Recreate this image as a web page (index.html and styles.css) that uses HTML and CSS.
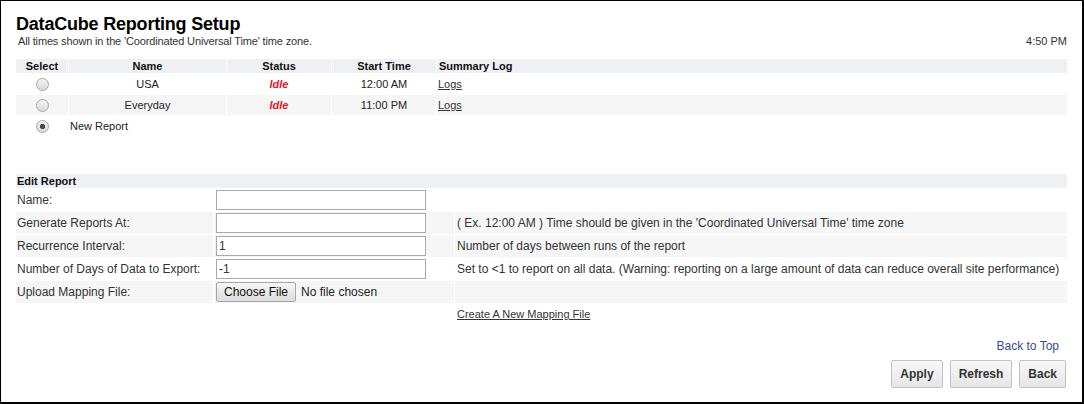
FILE: index.html
```html
<!DOCTYPE html>
<html lang="en">
<head>
<meta charset="utf-8">
<title>DataCube Reporting Setup</title>
<link rel="stylesheet" href="styles.css">
</head>
<body>
<div class="page">
  <h1 class="title">DataCube Reporting Setup</h1>
  <div class="subhead">
    <span class="zone-note">All times shown in the 'Coordinated Universal Time' time zone.</span>
    <span>4:50 PM</span>
  </div>

  <table class="reports">
    <colgroup>
      <col class="c-select"><col class="c-name"><col class="c-status"><col class="c-time"><col>
    </colgroup>
    <thead>
      <tr><th>Select</th><th>Name</th><th>Status</th><th>Start Time</th><th class="left">Summary Log</th></tr>
    </thead>
    <tbody>
      <tr>
        <td><input type="radio" name="report" class="radio"></td>
        <td>USA</td>
        <td class="idle">Idle</td>
        <td>12:00 AM</td>
        <td class="left"><a href="#" class="plain-link">Logs</a></td>
      </tr>
      <tr class="alt">
        <td><input type="radio" name="report" class="radio"></td>
        <td>Everyday</td>
        <td class="idle">Idle</td>
        <td>11:00 PM</td>
        <td class="left"><a href="#" class="plain-link">Logs</a></td>
      </tr>
      <tr>
        <td><input type="radio" name="report" class="radio" checked></td>
        <td colspan="4" class="left new-report">New Report</td>
      </tr>
    </tbody>
  </table>

  <table class="edit">
    <colgroup>
      <col class="c-label"><col class="c-input"><col>
    </colgroup>
    <thead>
      <tr><th colspan="3">Edit Report</th></tr>
    </thead>
    <tbody>
      <tr>
        <td class="label">Name:</td>
        <td><input type="text" class="field"></td>
        <td class="desc"></td>
      </tr>
      <tr class="alt">
        <td class="label">Generate Reports At:</td>
        <td><input type="text" class="field"></td>
        <td class="desc">( Ex. 12:00 AM ) Time should be given in the 'Coordinated Universal Time' time zone</td>
      </tr>
      <tr class="alt">
        <td class="label">Recurrence Interval:</td>
        <td><input type="text" class="field" value="1"></td>
        <td class="desc">Number of days between runs of the report</td>
      </tr>
      <tr>
        <td class="label">Number of Days of Data to Export:</td>
        <td><input type="text" class="field" value="-1"></td>
        <td class="desc">Set to &lt;1 to report on all data. (Warning: reporting on a large amount of data can reduce overall site performance)</td>
      </tr>
      <tr class="alt">
        <td class="label">Upload Mapping File:</td>
        <td><input type="file" class="file"></td>
        <td class="desc"></td>
      </tr>
      <tr class="link-row">
        <td></td>
        <td></td>
        <td class="desc"><a href="#" class="plain-link">Create A New Mapping File</a></td>
      </tr>
    </tbody>
  </table>

  <div class="back-top"><a href="#" class="top-link">Back to Top</a></div>

  <div class="actions">
    <button type="button" class="btn">Apply</button>
    <button type="button" class="btn">Refresh</button>
    <button type="button" class="btn">Back</button>
  </div>
</div>
</body>
</html>
```

FILE: styles.css
```css
* { box-sizing: border-box; }

html, body {
  margin: 0;
  padding: 0;
  background: #fff;
}

body {
  font-family: "Liberation Sans", Arial, sans-serif;
  color: #222;
}

.page {
  width: 1084px;
  height: 404px;
  border: 1px solid #000;
  border-right-width: 2px;
  border-bottom-width: 2px;
  padding: 13px 15px 0 15px;
  overflow: hidden;
}

.title {
  margin: 0;
  font-size: 18px;
  line-height: 21px;
  font-weight: bold;
  color: #000;
  letter-spacing: -0.2px;
}

.subhead {
  display: flex;
  justify-content: space-between;
  font-size: 11px;
  line-height: 12px;
  color: #333;
  padding-left: 2px;
}

.zone-note { letter-spacing: -0.15px; }

table {
  border-collapse: separate;
  border-spacing: 1px;
  table-layout: fixed;
  width: 1053px;
  margin-left: -1px;
}

.reports { margin-top: 11px; }

.c-select { width: 52px; }
.c-name { width: 157px; }
.c-status { width: 104px; }
.c-time { width: 104px; }

.c-label { width: 197px; }
.c-input { width: 240px; }

th {
  background: #eff0f4;
  font-size: 11px;
  font-weight: bold;
  color: #111;
  line-height: 14px;
  height: 14px;
  padding: 0;
  text-align: center;
}

.reports td {
  height: 20px;
  padding: 0;
  font-size: 11px;
  text-align: center;
  vertical-align: middle;
  color: #222;
}

.reports .left { text-align: left; padding-left: 1px; }
.reports th.left { padding-left: 2px; }

.alt td { background: #f6f6f6; }

.idle {
  color: #f0141e !important;
  font-weight: bold;
  font-style: italic;
}

.new-report { padding-left: 1px; }

.plain-link {
  color: #333;
  text-decoration: underline;
  font-size: 11px;
}

.radio {
  appearance: none;
  -webkit-appearance: none;
  display: block;
  width: 13px;
  height: 13px;
  margin: 0 auto;
  border: 1px solid #a6a6a6;
  border-radius: 50%;
  background: linear-gradient(#f5f5f5, #d9d9d9);
}

.radio:checked {
  background:
    radial-gradient(circle at center, #4a4a4a 0 2.3px, transparent 3px),
    linear-gradient(#f5f5f5, #d9d9d9);
}

.edit { margin-top: 36px; }

.edit th {
  text-align: left;
  padding-left: 1px;
}

.edit td {
  height: 22px;
  padding: 0;
  font-size: 12px;
  color: #333;
  vertical-align: middle;
}

.edit td.label { padding-left: 1px; }
.edit td.desc { padding-left: 2px; }

.edit .link-row td { height: 20px; }

.field {
  display: block;
  width: 210px;
  height: 20px;
  margin: 0 0 0 2px;
  padding: 0 2px;
  border: 1px solid #a9a9a9;
  font-family: "Liberation Sans", Arial, sans-serif;
  font-size: 12px;
  color: #333;
  background: #fff;
  outline: none;
}

.file {
  display: block;
  margin: 0 0 0 2px;
  width: 236px;
  height: 20px;
  font-family: "Liberation Sans", Arial, sans-serif;
  font-size: 12px;
  color: #222;
}

.file::file-selector-button {
  font-family: "Liberation Sans", Arial, sans-serif;
  font-size: 12px;
  color: #111;
  height: 20px;
  padding: 0 7px;
  margin: 0 5px 0 0;
  border: 1px solid #a6a6a6;
  border-radius: 2px;
  background: linear-gradient(#f6f6f6, #dcdcdc);
}

.back-top {
  margin-top: 14px;
  text-align: right;
  padding-right: 8px;
  font-size: 12px;
  line-height: 14px;
}

.top-link {
  color: #3a4c8c;
  text-decoration: none;
}

.actions {
  margin-top: 7px;
  display: flex;
  justify-content: flex-end;
  gap: 7px;
  padding-right: 1px;
}

.btn {
  height: 28px;
  padding: 0 8px;
  border: 1px solid #c3c3c3;
  border-radius: 2px;
  background: linear-gradient(#f8f8f8, #e6e6e6);
  font-family: "Liberation Sans", Arial, sans-serif;
  font-size: 12px;
  font-weight: bold;
  color: #333;
}
```
